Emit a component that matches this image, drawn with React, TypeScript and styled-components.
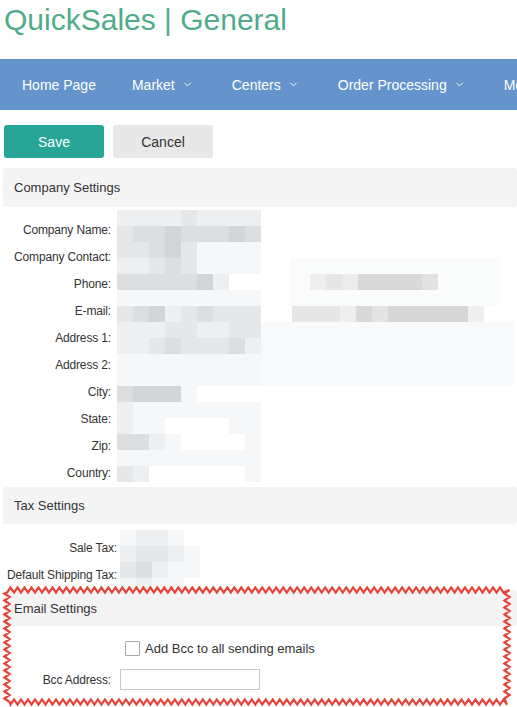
import React from 'react';
import styled, { createGlobalStyle } from 'styled-components';
import { ChevronDown } from 'lucide-react';

const GlobalStyle = createGlobalStyle`
  body {
    margin: 0;
    background: #fff;
    font-family: 'Liberation Sans', Arial, sans-serif;
    color: #333;
  }
`;

const shades: Record<string, string> = {
  a: '#f6f7f8',
  b: '#eeeff0',
  c: '#e6e7e8',
  d: '#dddee0',
  e: '#d4d5d7',
  w: '#ffffff',
};

// blurred values, 16px cells
const companyMosaic = [
  'bbbbcbbbb',
  'cddeddded',
  'ccdecaaaa',
  'bbcdcaaaa',
  'dddddebww',
  'aaaaaaaaa',
  'cdebcdccc',
  'bbbccbbcc',
  'bbcdcccdb',
  'aaaaaaaaa',
  'aaaaaaaaa',
  'deeeawwww',
  'baaaaaaaa',
  'baawwwwaa',
  'ddbawwwwa',
  'aaaaaaaaa',
  'cbwwwwwwa',
];

const taxMosaic = ['abbaw', 'bccba', 'cdbaa', 'abaaw'];

const companyExtras = [
  { x: 173, y: 48, w: 210, h: 48, fill: '#fafbfb' },
  { x: 144, y: 112, w: 252, h: 64, fill: '#f8f9fa' },
  { x: 193, y: 64, w: 16, h: 16, fill: '#eeeeee' },
  { x: 209, y: 64, w: 16, h: 16, fill: '#e6e6e6' },
  { x: 225, y: 64, w: 16, h: 16, fill: '#ececec' },
  { x: 241, y: 64, w: 64, h: 16, fill: '#d9d9d9' },
  { x: 305, y: 64, w: 16, h: 16, fill: '#e2e2e2' },
  { x: 175, y: 96, w: 48, h: 16, fill: '#e6e6e6' },
  { x: 223, y: 96, w: 16, h: 16, fill: '#eeeeee' },
  { x: 239, y: 96, w: 16, h: 16, fill: '#d9d9d9' },
  { x: 255, y: 96, w: 16, h: 16, fill: '#e4e4e4' },
  { x: 271, y: 96, w: 80, h: 16, fill: '#d7d7d7' },
  { x: 351, y: 96, w: 16, h: 16, fill: '#efefef' },
];

function Mosaic({ rows, extras = [] }: { rows: string[]; extras?: typeof companyExtras }) {
  return (
    <MosaicSvg width={400} height={rows.length * 16}>
      {extras.slice(0, 2).map((r, i) => (
        <rect key={'f' + i} x={r.x} y={r.y} width={r.w} height={r.h} fill={r.fill} />
      ))}
      {rows.map((row, y) =>
        row.split('').map((ch, x) => (
          <rect key={`${x}-${y}`} x={x * 16} y={y * 16} width={16} height={16} fill={shades[ch]} />
        ))
      )}
      {extras.slice(2).map((r, i) => (
        <rect key={'e' + i} x={r.x} y={r.y} width={r.w} height={r.h} fill={r.fill} />
      ))}
    </MosaicSvg>
  );
}

function ZigzagFrame() {
  const w = 517;
  const h = 122;
  const l = 7, r = 507, t = 4, b = 116, amp = 2.6, step = 3.5;
  const pts: string[] = [];
  let k = 0;
  const edge = (x1: number, y1: number, x2: number, y2: number) => {
    const len = Math.hypot(x2 - x1, y2 - y1);
    const n = Math.round(len / step);
    const nx = -(y2 - y1) / len;
    const ny = (x2 - x1) / len;
    for (let i = 0; i < n; i++) {
      const f = i / n;
      const o = k++ % 2 === 0 ? amp : -amp;
      pts.push(`${(x1 + (x2 - x1) * f + nx * o).toFixed(1)},${(y1 + (y2 - y1) * f + ny * o).toFixed(1)}`);
    }
  };
  edge(l, t, r, t);
  edge(r, t, r, b);
  edge(r, b, l, b);
  edge(l, b, l, t);
  return (
    <FrameSvg width={w} height={h}>
      <polygon points={pts.join(' ')} fill='none' stroke='#e5443a' strokeWidth={2.2} strokeLinejoin='miter' />
    </FrameSvg>
  );
}

const companyFields = [
  'Company Name:',
  'Company Contact:',
  'Phone:',
  'E-mail:',
  'Address 1:',
  'Address 2:',
  'City:',
  'State:',
  'Zip:',
  'Country:',
];

const navItems = [
  { label: 'Home Page', menu: false },
  { label: 'Market', menu: true },
  { label: 'Centers', menu: true },
  { label: 'Order Processing', menu: true },
  { label: 'More', menu: true },
];

export default function App() {
  return (
    <Page>
      <GlobalStyle />
      <Title>QuickSales | General</Title>
      <NavBar>
        {navItems.map((item) => (
          <NavItem key={item.label}>
            {item.label}
            {item.menu && (
              <Chevron>
                <ChevronDown size={11} strokeWidth={2} />
              </Chevron>
            )}
          </NavItem>
        ))}
      </NavBar>
      <Actions>
        <Button $primary>Save</Button>
        <Button>Cancel</Button>
      </Actions>

      <SectionHeader>Company Settings</SectionHeader>
      <FormGrid $labelWidth={111} $gap={6} $top={9}>
        {companyFields.map((f, i) => (
          <Label key={f} style={{ gridRow: i + 1 }}>
            {f}
          </Label>
        ))}
        <ValueArea $rows={companyFields.length} $offset={-6}>
          <Mosaic rows={companyMosaic} extras={companyExtras} />
        </ValueArea>
      </FormGrid>

      <SectionHeader $height={37} $top={9}>Tax Settings</SectionHeader>
      <FormGrid $labelWidth={117} $gap={3} $top={10}>
        <Label style={{ gridRow: 1 }}>Sale Tax:</Label>
        <Label style={{ gridRow: 2 }}>Default Shipping Tax:</Label>
        <ValueArea $rows={2} $offset={-4}>
          <Mosaic rows={taxMosaic} />
        </ValueArea>
      </FormGrid>

      <EmailSection>
        <SectionHeader $height={36} $top={0}>
          Email Settings
        </SectionHeader>
        <EmailBody>
          <CheckRow>
            <Checkbox />
            <CheckText>Add Bcc to all sending emails</CheckText>
          </CheckRow>
          <InputRow>
            <Label>Bcc Address:</Label>
            <TextInput />
          </InputRow>
        </EmailBody>
        <ZigzagFrame />
      </EmailSection>
    </Page>
  );
}

const Page = styled.div({
  width: 517,
  height: 707,
  overflow: 'hidden',
});

const Title = styled.h1({
  margin: 0,
  height: 59,
  padding: '3px 0 0 4px',
  boxSizing: 'border-box',
  fontSize: 30,
  fontWeight: 400,
  lineHeight: '34px',
  color: '#51ab8b',
});

const NavBar = styled.nav({
  height: 51,
  background: '#6594cd',
  display: 'flex',
  alignItems: 'center',
  paddingLeft: 4,
  whiteSpace: 'nowrap',
});

const NavItem = styled.div({
  display: 'flex',
  alignItems: 'center',
  padding: '0 18px',
  fontSize: 14,
  color: '#fff',
  flexShrink: 0,
});

const Chevron = styled.span({
  display: 'inline-flex',
  marginLeft: 7,
  marginRight: 3,
});

const Actions = styled.div({
  display: 'flex',
  gap: 9,
  padding: '15px 0 0 4px',
});

const Button = styled.button<{ $primary?: boolean }>((p) => ({
  width: 100,
  height: 33,
  border: 'none',
  borderRadius: 3,
  fontFamily: "'Liberation Sans', Arial, sans-serif",
  fontSize: 14,
  color: p.$primary ? '#fff' : '#333',
  background: p.$primary ? '#27a596' : '#e8e8e8',
  padding: 0,
}));

const SectionHeader = styled.div<{ $height?: number; $top?: number }>((p) => ({
  marginTop: p.$top ?? 10,
  marginLeft: 3,
  height: p.$height ?? 39,
  display: 'flex',
  alignItems: 'center',
  paddingLeft: 11,
  background: '#f4f4f4',
  borderRadius: 3,
  fontSize: 13,
  color: '#333',
}));

const FormGrid = styled.div<{ $labelWidth: number; $gap: number; $top: number }>((p) => ({
  display: 'grid',
  gridTemplateColumns: `${p.$labelWidth}px 1fr`,
  gridAutoRows: 27,
  columnGap: p.$gap,
  paddingTop: p.$top,
  marginBottom: -8,
}));

const Label = styled.div({
  gridColumn: 1,
  fontSize: 12,
  letterSpacing: -0.15,
  color: '#333',
  textAlign: 'right',
  whiteSpace: 'nowrap',
  alignSelf: 'center',
});

const ValueArea = styled.div<{ $rows: number; $offset: number }>((p) => ({
  gridColumn: 2,
  gridRow: `1 / ${p.$rows + 1}`,
  marginTop: p.$offset,
  overflow: 'hidden',
}));

const MosaicSvg = styled.svg({
  display: 'block',
});

const EmailSection = styled.div({
  position: 'relative',
  marginTop: 10,
});

const EmailBody = styled.div({
  padding: '15px 0 10px',
  display: 'flex',
  flexDirection: 'column',
  gap: 13,
});

const CheckRow = styled.label({
  display: 'flex',
  alignItems: 'center',
  paddingLeft: 125,
  gap: 5,
});

const Checkbox = styled.span({
  width: 13,
  height: 13,
  border: '1px solid #a9a9a9',
  borderRadius: 1,
  background: '#fff',
});

const CheckText = styled.span({
  fontSize: 13,
  color: '#333',
});

const InputRow = styled.div({
  display: 'grid',
  gridTemplateColumns: '111px 140px',
  columnGap: 9,
  alignItems: 'center',
});

const TextInput = styled.input({
  height: 21,
  boxSizing: 'border-box',
  border: '1px solid #c8c8c8',
  padding: '0 4px',
  fontFamily: "'Liberation Sans', Arial, sans-serif",
  fontSize: 12,
  outline: 'none',
});

const FrameSvg = styled.svg({
  position: 'absolute',
  top: -4,
  left: 0,
  pointerEvents: 'none',
});
